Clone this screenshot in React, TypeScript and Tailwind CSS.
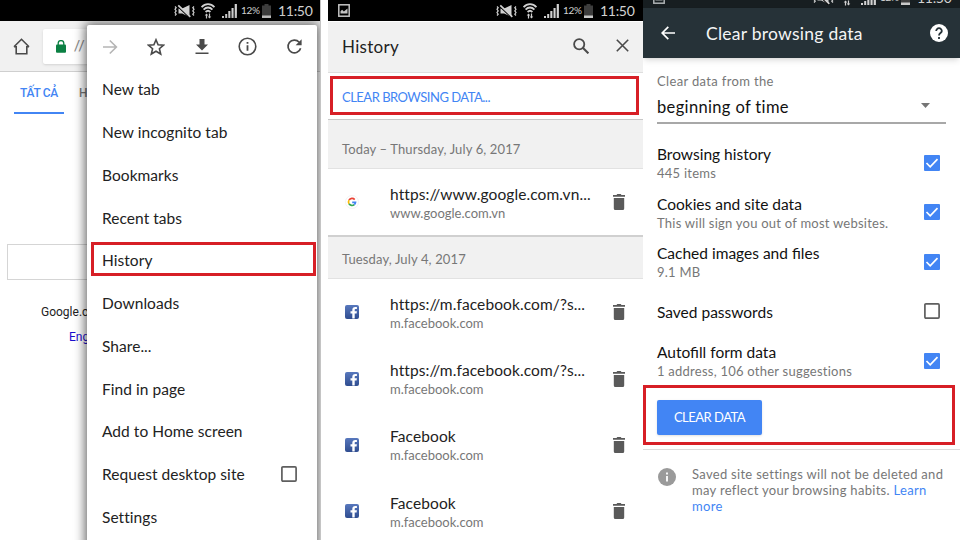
import React from "react";

const hand = "font-['Lato','Noto_Sans',sans-serif]";

function StatusIcons() {
  return (
    <div className="flex h-[21px] items-center text-[#d2d2d2]">
      <svg width="21" height="14" viewBox="0 0 21 14" className="mr-[6px]" fill="none" stroke="currentColor">
        <path d="M1 2.500l1.200 1.200L1 5.200l1.200 1.700L1 8.500l1.200 1.600L1 11.500M20 2.500l-1.200 1.200L20 5.200l-1.200 1.700L20 8.500l-1.200 1.600L20 11.500" strokeWidth="1.200" />
        <path d="M4.500 4.500h3.700L15.500 1v12L8.200 9.500H4.500z" fill="currentColor" stroke="none" />
        <path d="M4.500 3l11.500 11" stroke="#000" strokeWidth="1.500" />
        <path d="M4.300 1.300L16.300 12.800" strokeWidth="1.700" />
      </svg>
      <svg width="14" height="16" viewBox="0 0 14 16" className="mr-[7px]" fill="none" stroke="currentColor" strokeWidth="1.800">
        <path d="M.6 4.200C4.200.2 9.800.2 13.400 4.200M2.600 6.600c2.600-2.800 6.200-2.800 8.800 0M4.600 9c1.500-1.500 3.300-1.500 4.800 0" />
        <path d="M5.500 15.500v-4M8.500 10.500v4" strokeWidth="1.200" />
        <path d="M3.700 12.500l1.800-2 1.800 2zM6.700 13.600l1.800 2 1.800-2z" fill="currentColor" stroke="none" />
      </svg>
      <svg width="15" height="14" viewBox="0 0 15 14" className="mr-[4px]" fill="currentColor">
        <path d="M0 12h2v2H0zM3.200 10h2v4h-2zM6.300 7h2.100v7H6.300zM9.500 4h2.100v10H9.500zM12.700 0h2.200v14h-2.200z" />
      </svg>
      <span className="w-[21px] text-[10px] tracking-[-0.3px]">12%</span>
      <svg width="9" height="14" viewBox="0 0 9 14" className="mr-[7px]">
        <path d="M2.500 0h4v1.500H9V14H0V1.500h2.500z" fill="#3d3d3d" />
        <path d="M0 11.500h9V14H0z" fill="#c9c9c9" />
      </svg>
      <span className="w-[34px] text-[14px] tracking-[-0.3px] whitespace-nowrap">11:50</span>
    </div>
  );
}

function Picture({ className }: { className: string }) {
  return (
    <svg width="12" height="13" viewBox="0 0 12 13" className={className} fill="none" stroke="currentColor">
      <rect x=".8" y=".8" width="10.400" height="11.400" strokeWidth="1.500" />
      <path d="M2.500 9.500V7.300l1.600-1.500 1.800 1.600L9.500 4.500v5z" fill="currentColor" stroke="none" />
    </svg>
  );
}

function Box({ on = false }: { on?: boolean }) {
  return (
    <svg width="16" height="16" viewBox="0 0 16 16" fill="none" className="shrink-0">
      {on ? (
        <>
          <rect width="16" height="16" rx="1" fill="#4285f4" />
          <path d="M2.500 8l3.700 3.800 7.300-7.600" stroke="#fff" strokeWidth="1.700" />
        </>
      ) : (
        <rect x=".9" y=".9" width="14.200" height="14.200" rx="1" stroke="#5f5f5f" strokeWidth="1.700" />
      )}
    </svg>
  );
}

const menu = [
  "New tab",
  "New incognito tab",
  "Bookmarks",
  "Recent tabs",
  "History",
  "Downloads",
  "Share...",
  "Find in page",
  "Add to Home screen",
  "Request desktop site",
  "Settings",
];

function MenuScreen() {
  return (
    <section className="relative h-[540px] w-[320px] shrink-0 overflow-hidden bg-white">
      <div className="flex h-[21px] justify-end bg-black pr-[8px]">
        <StatusIcons />
      </div>
      <div className="flex h-[51px] items-center border-b border-[#cfcfcf] bg-[#f1f1f1] pl-[13px]">
        <svg width="17" height="17" viewBox="0 0 17 17" fill="none" stroke="#4a4a4a" strokeWidth="1.600">
          <path d="M1 8.800L8.500 1.300 16 8.800M1 8.800h2.200v6.900h10.600V8.800H16" />
        </svg>
        <div className="ml-[13px] flex h-[35px] w-[250px] items-center rounded-xs bg-white pl-[13px] shadow-sm">
          <svg width="10" height="13" viewBox="0 0 10 13" fill="none">
            <path d="M2.200 5V3.400a2.800 2.800 0 015.600 0V5" stroke="#0b8043" strokeWidth="1.300" />
            <rect y="4.500" width="10" height="8.300" rx="1" fill="#0b8043" />
          </svg>
          <span className="ml-[8px] font-[Roboto,sans-serif] text-[15px] text-[#888]">//</span>
        </div>
      </div>
      <div className="flex w-[87px] overflow-hidden font-[Roboto,sans-serif] text-[12px] font-medium">
        <div className="ml-[14px] flex h-[42px] w-[50px] shrink-0 items-center justify-center border-b-2 border-[#4285f4] pt-[2px] tracking-[-0.3px] whitespace-nowrap text-[#4285f4]">
          TẤT CẢ
        </div>
        <div className="ml-[15px] flex h-[42px] shrink-0 items-center text-[#777]">HÌ</div>
      </div>
      <div className="mt-[130px] ml-[7px] h-[36px] w-[306px] border border-[#d5d5d5]" />
      <div className="mt-[24px] w-[88px] overflow-hidden pl-[41px] font-[Roboto,sans-serif] text-[12px] leading-[17px] text-[#222]">Google.c</div>
      <div className="mt-[8px] w-[88px] overflow-hidden pl-[69px] font-[Roboto,sans-serif] text-[12px] leading-[17px] text-[#1a0dcc]">Eng</div>

      <div className="absolute top-[25px] left-[87px] h-[530px] w-[230px] rounded-xs bg-white shadow-[0_0_11px_2px_rgba(0,0,0,0.6)]">
        <div className="flex h-[43px] items-center justify-between pr-[14px] pl-[15px]">
          <svg width="16" height="16" viewBox="0 0 16 16" fill="none" stroke="#b5b5b5" strokeWidth="1.600">
            <path d="M1 8h13M7.800 1.500L14.400 8l-6.600 6.500" />
          </svg>
          <svg width="18" height="18" viewBox="0 0 18 18" fill="none" stroke="#4a4a4a" strokeWidth="1.600">
            <path d="M9 1.800l2.100 5 5.400.4-4.100 3.500 1.300 5.300L9 13.200 4.300 16l1.300-5.300L1.500 7.200l5.400-.4z" />
          </svg>
          <svg width="14" height="17" viewBox="0 0 14 17" fill="#4a4a4a">
            <path d="M4.500 1h5v5.500H13l-6 6-6-6h3.500zM.500 14.500h13V16H.500z" />
          </svg>
          <svg width="19" height="19" viewBox="0 0 19 19" fill="none" stroke="#4a4a4a" strokeWidth="1.600">
            <circle cx="9.500" cy="9.500" r="8.300" />
            <path d="M9.500 8.300v5.500M9.500 5v1.800" strokeWidth="1.800" />
          </svg>
          <svg width="17" height="17" viewBox="0 0 17 17" fill="none" stroke="#4a4a4a" strokeWidth="1.700">
            <path d="M14.600 10.200a6.400 6.400 0 11-1.400-6" />
            <path d="M15.600 1.300v6H9.600z" fill="#4a4a4a" stroke="none" />
          </svg>
        </div>
        {menu.map((m) => (
          <div key={m} className="flex h-[42.750px] items-center justify-between pr-[20px] pl-[15px] text-[15.500px] tracking-[0.05px] text-[#222]">
            <span className="pt-px">{m}</span>
            {m === "Request desktop site" && <Box />}
          </div>
        ))}
      </div>
      <div className="absolute top-[242px] left-[91px] h-[34px] w-[225px] border-3 border-[#d71f26]" />
    </section>
  );
}

function Trash() {
  return (
    <svg width="12" height="16" viewBox="0 0 12 16" fill="#5a5a5a">
      <path d="M0 1h3.500L4.300 0h3.400l.8 1H12v1.700H0zM.8 4h10.400v10.500A1.500 1.500 0 019.700 16H2.300A1.500 1.500 0 01.8 14.500z" />
    </svg>
  );
}

function Facebook() {
  return (
    <svg width="14" height="14" viewBox="0 0 14 14">
      <defs>
        <linearGradient id="fb" x1="0" y1="0" x2="0" y2="1">
          <stop offset="0" stopColor="#5878bd" />
          <stop offset="1" stopColor="#2f4d90" />
        </linearGradient>
      </defs>
      <rect width="14" height="14" rx="2" fill="url(#fb)" />
      <path d="M7.300 13.500V8.400H5.500V6.300h1.800V4.900c0-2 1.100-3 3-3h1.600V4h-1.200c-.7 0-1 .3-1 1v1.300h2.200l-.3 2.100H9.700v5.100z" fill="#fff" />
    </svg>
  );
}

function Google() {
  return (
    <svg width="14" height="14" viewBox="0 0 14 14" fill="none" strokeWidth="1.700">
      <circle cx="7" cy="7" r="6.500" fill="#fff" stroke="#f0f0f0" strokeWidth=".8" />
      <path d="M9.700 4.600A3.500 3.500 0 004 5.200" stroke="#ea4335" />
      <path d="M4 5.200a3.500 3.500 0 000 3.600" stroke="#fbbc05" />
      <path d="M4 8.800a3.500 3.500 0 005.300.8" stroke="#34a853" />
      <path d="M9.300 9.600A3.500 3.500 0 0010.500 7.300H7.200" stroke="#4285f4" />
    </svg>
  );
}

function Entry({ title, site, google = false }: { title: string; site: string; google?: boolean }) {
  return (
    <div className="flex h-[66.250px] items-center pr-[18px] pl-[17px]">
      {google ? <Google /> : <Facebook />}
      <div className="ml-[31px] flex-1 pt-[3px] whitespace-nowrap">
        <div className="text-[15.500px] leading-[19px] tracking-[0.1px] text-[#222]">{title}</div>
        <div className="text-[13px] leading-[19px] tracking-[0px] text-[#777]">{site}</div>
      </div>
      <Trash />
    </div>
  );
}

function HistoryScreen() {
  return (
    <section className="relative ml-[7px] h-[540px] w-[315px] shrink-0 overflow-hidden bg-white">
      <div className="flex h-[21px] items-center justify-between bg-black pr-[9px] pl-[10px]">
        <Picture className="text-[#c4c4c4]" />
        <StatusIcons />
      </div>
      <div className="mt-px flex h-[51px] items-center border-b border-[#dedede] bg-[#f1f1f1] pr-[14px] pl-[14px]">
        <h1 className="flex-1 text-[17px] tracking-[0.3px] text-[#222]">History</h1>
        <svg width="16" height="16" viewBox="0 0 16 16" className="mb-[3px]" fill="none" stroke="#4a4a4a" strokeWidth="1.800">
          <circle cx="6.200" cy="6.200" r="5.100" />
          <path d="M9.800 9.800l5.600 5.600" strokeWidth="2" />
        </svg>
        <svg width="13" height="13" viewBox="0 0 13 13" className="mb-[3px] ml-[27px]" fill="none" stroke="#4a4a4a" strokeWidth="1.600">
          <path d="M.8.8l11.400 11.400M12.200.8L.8 12.200" />
        </svg>
      </div>
      <div className="flex h-[47px] items-center border-b border-[#c8c8c8] pt-[3px] pl-[14px] text-[13px] tracking-[-0.5px] text-[#4285f4]">CLEAR BROWSING DATA...</div>
      <div className="flex h-[49px] items-center border-b border-[#e2e2e2] bg-[#f1f1f1] pt-[11px] pl-[14px] text-[13px] tracking-[0.130px] text-[#777]">Today – Thursday, July 6, 2017</div>
      <Entry google title="https://www.google.com.vn..." site="www.google.com.vn" />
      <div className="flex h-[44px] items-center border-t-2 border-b border-t-[#d0d0d0] border-b-[#e2e2e2] bg-[#f1f1f1] pt-[3px] pl-[14px] text-[13px] tracking-[0.130px] text-[#777]">Tuesday, July 4, 2017</div>
      <Entry title="https://m.facebook.com/?s..." site="m.facebook.com" />
      <Entry title="https://m.facebook.com/?s..." site="m.facebook.com" />
      <Entry title="Facebook" site="m.facebook.com" />
      <Entry title="Facebook" site="m.facebook.com" />
      <div className="absolute top-[76px] left-[2px] h-[39px] w-[309px] border-3 border-[#d71f26]" />
    </section>
  );
}

const options = [
  { title: "Browsing history", note: "445 items", on: true },
  { title: "Cookies and site data", note: "This will sign you out of most websites.", on: true },
  { title: "Cached images and files", note: "9.1 MB", on: true },
  { title: "Saved passwords", note: "", on: false },
  { title: "Autofill form data", note: "1 address, 106 other suggestions", on: true },
];

function ClearScreen() {
  return (
    <section className="relative h-[540px] w-[317px] shrink-0 overflow-hidden bg-white">
      <div className="flex h-[8px] items-end justify-between overflow-hidden bg-[#171e21] pr-[9px] pl-[10px]">
        <Picture className="mb-[4px] text-[#aeb2b4]" />
        <StatusIcons />
      </div>
      <div className="flex h-[50px] items-center bg-[#263238] pr-[12px] pl-[18px] shadow-md">
        <svg width="14" height="14" viewBox="0 0 14 14" fill="none" stroke="#fff" strokeWidth="1.700">
          <path d="M14 7H1.500M7.300.9L1.200 7l6.100 6.100" />
        </svg>
        <h1 className="ml-[31px] flex-1 pt-[2px] text-[17.500px] tracking-[0.250px] text-[#f4f5f5]">Clear browsing data</h1>
        <svg width="18" height="18" viewBox="0 0 18 18" fill="none">
          <circle cx="9" cy="9" r="9" fill="#fff" />
          <path d="M6.200 7a2.800 2.800 0 115.600 0c0 2-2.800 2.100-2.800 4.400M9 12.900v2" stroke="#263238" strokeWidth="1.800" />
        </svg>
      </div>
      <div className="mr-[14px] ml-[14px] h-[66px] border-b-2 border-[#a8a8a8] pt-[13px]">
        <div className="text-[13px] leading-[20px] tracking-[0.350px] text-[#777]">Clear data from the</div>
        <div className="flex items-center justify-between pt-[4px] pr-[16px] text-[16.500px] leading-[24px] tracking-[0.350px] text-[#111]">
          beginning of time
          <svg width="9" height="5" viewBox="0 0 9 5" className="mb-[3px]" fill="#757575">
            <path d="M0 0h9L4.500 5z" />
          </svg>
        </div>
      </div>
      <div className="mt-[14px]">
        {options.map((o) => (
          <div key={o.title} className="flex h-[49.500px] items-center justify-between pr-[20px] pl-[14px]">
            <div className="pt-[3px]">
              <div className="text-[15.500px] leading-[19px] tracking-[0px] text-[#111]">{o.title}</div>
              {o.note && <div className="text-[13px] leading-[19px] tracking-[0.240px] text-[#777]">{o.note}</div>}
            </div>
            <Box on={o.on} />
          </div>
        ))}
      </div>
      <div className="mt-[14px] ml-[14px] flex h-[35px] w-[105px] items-center justify-center rounded-xs bg-[#4285f4] pt-[2px] text-[13px] tracking-[-0.5px] text-white shadow-sm">CLEAR DATA</div>
      <div className="mt-[14px] flex border-t border-[#dcdcdc] pt-[16px] pl-[15px]">
        <svg width="18" height="18" viewBox="0 0 18 18" className="mt-[2px]" fill="none" stroke="#fff" strokeWidth="1.800">
          <circle cx="9" cy="9" r="9" fill="#9a9a9a" stroke="none" />
          <path d="M9 8v5.500M9 4.600v1.800" />
        </svg>
        <p className="ml-[16px] text-[13px] leading-[16px] tracking-[0.300px] whitespace-nowrap text-[#777]">
          Saved site settings will not be deleted and
          <br />
          may reflect your browsing habits. <span className="text-[#4285f4]">Learn</span>
          <br />
          <span className="text-[#4285f4]">more</span>
        </p>
      </div>
      <div className="absolute top-[385px] left-0 h-[60px] w-[312px] border-3 border-[#d71f26]" />
    </section>
  );
}

export default function App() {
  return (
    <main className={`flex h-[540px] w-[960px] overflow-hidden bg-white ${hand}`}>
      <MenuScreen />
      <div className="w-px shrink-0 bg-[#c4c4c4]" />
      <HistoryScreen />
      <ClearScreen />
    </main>
  );
}
